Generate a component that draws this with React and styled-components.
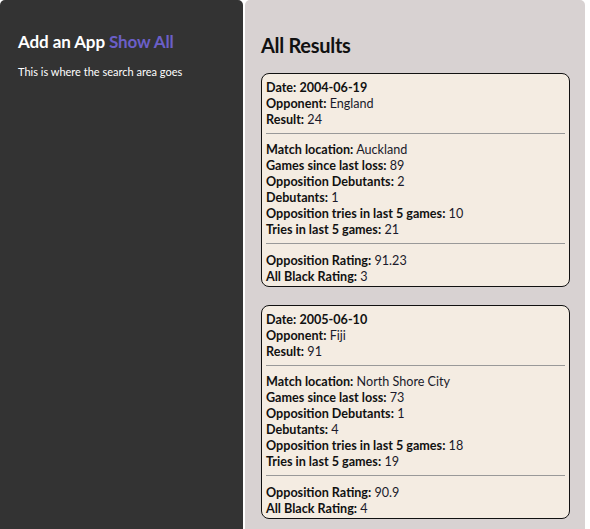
import React from "react";
import styled, { createGlobalStyle } from "styled-components";

const GlobalStyle = createGlobalStyle`
  body {
    margin: 0;
    background: #ffffff;
    font-family: Lato, "Open Sans", sans-serif;
  }
`;

const results = [
  {
    date: "2004-06-19",
    opponent: "England",
    result: 24,
    location: "Auckland",
    sinceLoss: 89,
    oppDebutants: 2,
    debutants: 1,
    oppTries: 10,
    tries: 21,
    oppRating: 91.23,
    abRating: 3,
  },
  {
    date: "2005-06-10",
    opponent: "Fiji",
    result: 91,
    location: "North Shore City",
    sinceLoss: 73,
    oppDebutants: 1,
    debutants: 4,
    oppTries: 18,
    tries: 19,
    oppRating: 90.9,
    abRating: 4,
  },
];

function Field({ label, value }) {
  return (
    <Line>
      <b>{label}:</b> {value}
    </Line>
  );
}

function ResultCard({ item }) {
  return (
    <Card>
      <Line>
        <b>Date: {item.date}</b>
      </Line>
      <Field label="Opponent" value={item.opponent} />
      <Field label="Result" value={item.result} />
      <Divider />
      <Field label="Match location" value={item.location} />
      <Field label="Games since last loss" value={item.sinceLoss} />
      <Field label="Opposition Debutants" value={item.oppDebutants} />
      <Field label="Debutants" value={item.debutants} />
      <Field label="Opposition tries in last 5 games" value={item.oppTries} />
      <Field label="Tries in last 5 games" value={item.tries} />
      <Divider $wide />
      <Field label="Opposition Rating" value={item.oppRating} />
      <Field label="All Black Rating" value={item.abRating} />
    </Card>
  );
}

export default function App() {
  return (
    <>
      <GlobalStyle />
      <Layout>
        <SearchPanel>
          <Title>
            Add an App <ShowAll>Show All</ShowAll>
          </Title>
          <Hint>This is where the search area goes</Hint>
        </SearchPanel>
        <ResultsPanel>
          <Heading>All Results</Heading>
          <CardList>
            {results.map((item) => (
              <ResultCard key={item.date} item={item} />
            ))}
          </CardList>
        </ResultsPanel>
      </Layout>
    </>
  );
}

const Layout = styled.div`
  display: grid;
  grid-template-columns: 243px 340px;
  gap: 2px;
  height: 100vh;
  overflow: hidden;
`;

const SearchPanel = styled.div`
  background: #333333;
  border-radius: 5px 5px 0 0;
  padding: 31px 18px 0;
  color: #ffffff;
`;

const Title = styled.h2`
  margin: 0;
  font-size: 17px;
  font-weight: 700;
  line-height: 22px;
  letter-spacing: -0.1px;
`;

const ShowAll = styled.span`
  color: #6b5fc7;
`;

const Hint = styled.p`
  margin: 12px 0 0;
  font-size: 11px;
  line-height: 14px;
`;

const ResultsPanel = styled.div`
  background: #d8d2d2;
  border-radius: 5px 5px 0 0;
  padding: 32px 15px 0 16px;
  overflow: hidden;
`;

const Heading = styled.h2`
  margin: 0 0 15px;
  font-size: 20px;
  font-weight: 700;
  line-height: 26px;
  color: #111111;
  letter-spacing: -0.3px;
`;

const CardList = styled.div`
  display: flex;
  flex-direction: column;
  gap: 18px;
`;

const Card = styled.div`
  background: #f4ece2;
  border: 1px solid #111111;
  border-radius: 8px;
  padding: 6px 4px 1px;
  font-size: 12.6px;
  line-height: 16px;
  color: #1a1a2a;

  b {
    font-weight: 700;
    color: #111111;
  }
`;

const Line = styled.div``;

const Divider = styled.hr`
  border: none;
  border-top: 1px solid #999999;
  margin: ${(p) => (p.$wide ? "5px 0 9px" : "5px 0 8px")};
`;
